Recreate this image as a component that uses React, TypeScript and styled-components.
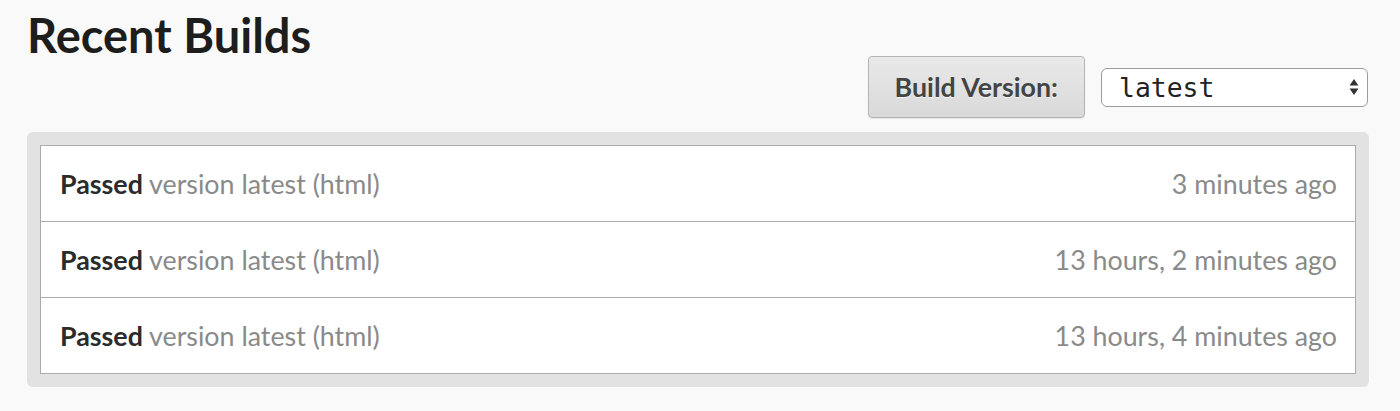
import React, { useState } from 'react';
import styled, { createGlobalStyle } from 'styled-components';

const GlobalStyle = createGlobalStyle`
  html, body {
    margin: 0;
    padding: 0;
    background: #f9f9f9;
  }
`;

const builds = [
  { id: 1, status: 'Passed', version: 'latest', kind: 'html', when: '3 minutes ago' },
  { id: 2, status: 'Passed', version: 'latest', kind: 'html', when: '13 hours, 2 minutes ago' },
  { id: 3, status: 'Passed', version: 'latest', kind: 'html', when: '13 hours, 4 minutes ago' },
];

const Page = styled.div`
  padding: 13px 31px 0 27px;
  font-family: Lato, 'Open Sans', sans-serif;
  display: flex;
  flex-direction: column;
`;

const Title = styled.h1`
  margin: 0;
  font-size: 47px;
  line-height: 44px;
  font-weight: 700;
  color: #1d1d1d;
`;

const Toolbar = styled.div`
  display: flex;
  justify-content: flex-end;
  align-items: center;
  gap: 16px;
  margin-top: -1px;
  padding-right: 1px;
`;

const VersionButton = styled.button`
  height: 62px;
  padding: 0 26px;
  font-family: Lato, sans-serif;
  font-size: 26.8px;
  font-weight: 700;
  color: #444;
  text-shadow: 0 1px 0 rgba(255, 255, 255, 0.7);
  background: linear-gradient(#e9e9e9, #d9d9d9);
  border: 1px solid #b4b4b4;
  border-radius: 4px;
  box-shadow: 0 1px 1px rgba(0, 0, 0, 0.08);
`;

const SelectBox = styled.div`
  width: 267px;
  height: 39px;
  box-sizing: border-box;
  display: flex;
  align-items: center;
  padding: 0 8px 0 17px;
  background: #fff;
  border: 1px solid #9c9c9c;
  border-radius: 6px;
`;

const Select = styled.select`
  flex: 1;
  appearance: none;
  border: none;
  background: transparent;
  outline: none;
  padding: 0;
  font-family: 'DejaVu Sans Mono', 'Liberation Mono', monospace;
  font-size: 26.4px;
  color: #222;
`;

const Panel = styled.div`
  margin-top: 14px;
  padding: 13px;
  background: #e2e2e2;
  border-radius: 6px;
`;

const List = styled.div`
  background: #fff;
  border: 1px solid #aaa;
`;

const Row = styled.div`
  height: 75px;
  display: flex;
  align-items: center;
  justify-content: space-between;
  padding: 0 18px 0 19px;
  font-size: 26.8px;
  color: #8a8a8a;

  & + & {
    border-top: 1px solid #aaa;
  }

  strong {
    color: #2b2b2b;
    font-weight: 700;
  }
`;

function Arrows() {
  return (
    <svg width="10" height="20" viewBox="0 0 10 20">
      <path d="M5 2 L9.5 8.5 L0.5 8.5 Z" fill="#333" />
      <path d="M5 18 L9.5 11.5 L0.5 11.5 Z" fill="#333" />
    </svg>
  );
}

function App() {
  const [version, setVersion] = useState('latest');

  return (
    <Page>
      <GlobalStyle />
      <Title>Recent Builds</Title>
      <Toolbar>
        <VersionButton>Build Version:</VersionButton>
        <SelectBox>
          <Select value={version} onChange={e => setVersion(e.target.value)}>
            <option value="latest">latest</option>
            <option value="stable">stable</option>
          </Select>
          <Arrows />
        </SelectBox>
      </Toolbar>
      <Panel>
        <List>
          {builds.map(b => (
            <Row key={b.id}>
              <span>
                <strong>{b.status}</strong> version {b.version} ({b.kind})
              </span>
              <span>{b.when}</span>
            </Row>
          ))}
        </List>
      </Panel>
    </Page>
  );
}

export default App;
